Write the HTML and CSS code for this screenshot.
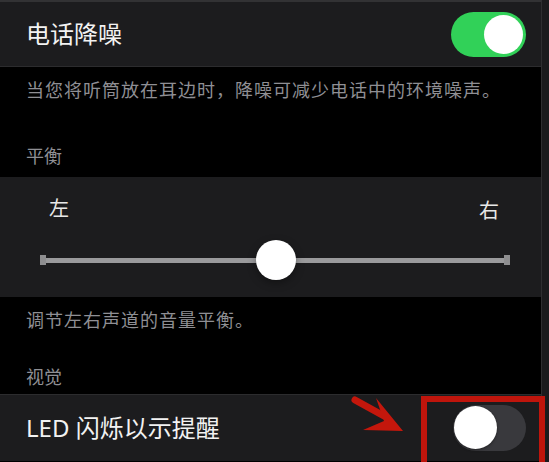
FILE: index.html
```html
<!DOCTYPE html>
<html lang="zh-CN">
<head>
<meta charset="utf-8">
<title>电话降噪</title>
<link rel="stylesheet" href="styles.css">
</head>
<body>
<div class="screen">
  <div class="row row-first">
    <span class="row-title">电话降噪</span>
    <span class="switch switch-on"><span class="knob"></span></span>
  </div>
  <div class="note note-first">当您将听筒放在耳边时，降噪可减少电话中的环境噪声。</div>
  <div class="section-head head-balance">平衡</div>
  <div class="panel">
    <div class="labels"><span>左</span><span class="label-right">右</span></div>
    <div class="slider">
      <span class="cap"></span>
      <span class="track"></span>
      <span class="cap"></span>
      <span class="thumb"></span>
    </div>
  </div>
  <div class="note note-second">调节左右声道的音量平衡。</div>
  <div class="section-head head-visual">视觉</div>
  <div class="row row-led">
    <span class="row-title">LED 闪烁以示提醒</span>
    <span class="switch switch-off"><span class="knob"></span></span>
  </div>
  <div class="highlight"></div>
  <svg class="arrow" width="60" height="44" viewBox="0 0 60 44">
    <path d="M5 5 L34 21" stroke="#c4170c" stroke-width="7" stroke-linecap="round" fill="none"/>
    <path d="M26 3 L53 36 L13 35 L34 26 Z" fill="#c4170c"/>
  </svg>
</div>
</body>
</html>
```
FILE: styles.css
```css
html, body {
  margin: 0;
  padding: 0;
  background: #1b1b1d;
}
body {
  width: 549px;
  height: 462px;
  overflow: hidden;
  font-family: "Noto Sans", "Noto Sans CJK SC", sans-serif;
}
.screen {
  position: relative;
  width: 542px;
  height: 462px;
  background: #000;
  border-right: 1px solid #2e2e30;
  border-top: 2px solid #323234;
  display: flex;
  flex-direction: column;
  box-sizing: border-box;
}
.row {
  background: #1c1c1e;
  height: 64px;
  display: flex;
  align-items: center;
  justify-content: space-between;
  padding: 0 15px 0 26px;
  flex-shrink: 0;
}
.row-first {
  border-bottom: 1px solid #2c2c2e;
}
.row-led {
  border-top: 1px solid #2c2c2e;
  height: 66px;
}
.row-title {
  color: #f2f2f2;
  font-size: 24px;
  line-height: 30px;
}
.switch {
  position: relative;
  width: 75px;
  height: 45px;
  border-radius: 23px;
  flex-shrink: 0;
}
.switch-on {
  background: #31d158;
}
.switch-off {
  background: #39393d;
  width: 73px;
  height: 46px;
}
.knob {
  position: absolute;
  top: 3px;
  width: 39px;
  height: 39px;
  border-radius: 50%;
  background: #fff;
}
.switch-on .knob {
  right: 3px;
}
.switch-off .knob {
  left: 1px;
  top: 1px;
  width: 43px;
  height: 43px;
  box-shadow: 0 1px 3px rgba(0,0,0,0.4);
}
.note {
  color: #8f8f94;
  font-size: 18px;
  line-height: 24px;
  letter-spacing: 1px;
  padding: 11px 0 13px 26px;
  flex-shrink: 0;
}
.section-head {
  color: #8f8f94;
  font-size: 18px;
  line-height: 24px;
  padding-left: 26px;
  flex-shrink: 0;
}
.head-balance {
  padding-top: 29px;
  padding-bottom: 9px;
}
.head-visual {
  padding-top: 20px;
  padding-bottom: 5px;
}
.panel {
  background: #1c1c1e;
  height: 120px;
  box-sizing: border-box;
  padding-top: 20px;
  flex-shrink: 0;
}
.labels {
  display: flex;
  justify-content: space-between;
  padding: 0 42px 0 49px;
  color: #e8e8e8;
  font-size: 20px;
  line-height: 24px;
}
.label-right {
  position: relative;
  top: 2px;
}
.slider {
  position: relative;
  margin: 19px 31px 0 40px;
  height: 40px;
  display: flex;
  align-items: center;
}
.track {
  flex: 1;
  height: 5px;
  background: #9a9a9c;
}
.cap {
  width: 6px;
  height: 10px;
  background: #8e8e90;
}
.thumb {
  position: absolute;
  left: 216px;
  top: 0;
  width: 40px;
  height: 40px;
  border-radius: 50%;
  background: #fff;
  box-shadow: 0 3px 8px rgba(0,0,0,0.35);
}
.highlight {
  position: absolute;
  left: 421px;
  top: 394px;
  width: 124px;
  height: 80px;
  border: 6px solid #bf150c;
  box-sizing: border-box;
}
.arrow {
  position: absolute;
  left: 350px;
  top: 393px;
}
```
